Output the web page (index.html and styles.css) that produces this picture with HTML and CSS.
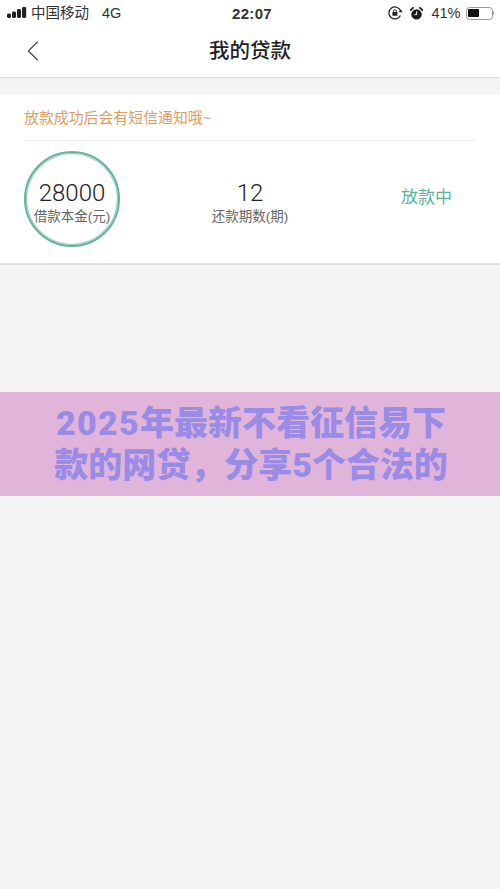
FILE: index.html
```html
<!DOCTYPE html>
<html>
<head>
    <title>我的贷款</title>
    <meta charset="utf-8">
    <link rel="stylesheet" href="styles.css">
</head>
<body>
    <div class="status-bar">
        <div class="status-left">
            <svg class="signal" width="20" height="12" viewBox="0 0 20 12">
                <rect x="0" y="6.5" width="4" height="4.5" rx="1.4"/>
                <rect x="5" y="4.5" width="4" height="6.5" rx="1.4"/>
                <rect x="10" y="2" width="4" height="9" rx="1.4"/>
                <rect x="15" y="0" width="4.2" height="11" rx="1.4"/>
            </svg>
            <span class="carrier">中国移动</span>
            <span class="network">4G</span>
        </div>
        <div class="status-time">22:07</div>
        <div class="status-right">
            <svg class="lock" width="15" height="14" viewBox="0 0 15 14">
                <path d="M12.4 9.4A6 6 0 1 1 12.6 5" fill="none" stroke="#222" stroke-width="1.3"/>
                <path d="M10.7 6.2h4l-2-2.6z" fill="#222"/>
                <rect x="4.4" y="6" width="5" height="3.8" rx=".6" fill="#222"/>
                <path d="M5.5 6V5a1.4 1.4 0 0 1 2.8 0v1" fill="none" stroke="#222" stroke-width=".9"/>
            </svg>
            <svg class="alarm" width="13" height="13" viewBox="0 0 13 13">
                <circle cx="6.5" cy="7.4" r="5.2" fill="#1c1c1c"/>
                <path d="M.6 3.2 3 .9M12.4 3.2 10 .9" stroke="#1c1c1c" stroke-width="1.8" stroke-linecap="round"/>
                <path d="M6.7 4.2v3.5H4.4" fill="none" stroke="#fff" stroke-width="1"/>
            </svg>
            <span class="battery-text">41%</span>
            <div class="battery"><div class="battery-fill"></div></div>
            <div class="battery-tip"></div>
        </div>
    </div>

    <div class="nav-bar">
        <svg class="back" width="12" height="20" viewBox="0 0 12 20">
            <path d="M10.8 .8 1.3 10l9.5 9.2" fill="none" stroke="#444" stroke-width="1.2"/>
        </svg>
        <div class="nav-title">我的贷款</div>
    </div>

    <div class="card">
        <div class="notice">放款成功后会有短信通知哦~</div>
        <div class="loan-row">
            <div class="circle">
                <div class="amount">28000</div>
                <div class="label">借款本金(元)</div>
            </div>
            <div class="periods">
                <div class="amount">12</div>
                <div class="label">还款期数(期)</div>
            </div>
            <div class="loan-status">放款中</div>
        </div>
    </div>

    <div class="banner">
        <div class="banner-text"><span class="year">2025</span>年最新不看征信易下<br>款的网贷，分享5个合法的</div>
    </div>
</body>
</html>
```

FILE: styles.css
```css
html, body {
    height: 100%;
}
body {
    margin: 0;
    background-color: #f4f4f4;
    font-family: "Liberation Sans", "Noto Sans CJK SC", sans-serif;
    color: #222;
}
.status-bar {
    height: 26px;
    background-color: #fff;
    display: grid;
    grid-template-columns: 1fr auto 1fr;
    align-items: center;
    padding: 0 8px 0 7px;
}
.status-left {
    display: flex;
    align-items: center;
    font-size: 14.5px;
    color: #333;
}
.signal {
    fill: #222;
    margin-right: 4px;
}
.carrier {
    margin-bottom: 3px;
}
.network {
    margin-left: 13px;
    font-size: 14.5px;
}
.status-time {
    font-size: 15px;
    font-weight: bold;
    letter-spacing: 0.3px;
    margin-left: 5px;
    color: #333;
}
.status-right {
    display: flex;
    align-items: center;
    justify-content: flex-end;
    font-size: 14.5px;
    color: #333;
}
.alarm {
    margin-left: 7px;
}
.battery-text {
    margin-left: 8px;
    margin-right: 5px;
}
.battery {
    width: 27px;
    height: 13px;
    box-sizing: border-box;
    border: 1px solid #999;
    border-radius: 3.5px;
    padding: 1.5px;
}
.battery-fill {
    width: 11px;
    height: 100%;
    background-color: #111;
    border-radius: 1px;
}
.battery-tip {
    width: 1.5px;
    height: 4px;
    background-color: #aaa;
    margin-right: -2px;
}
.nav-bar {
    height: 51px;
    background-color: #fff;
    border-bottom: 1px solid #dcdcdc;
    display: flex;
    align-items: center;
    justify-content: center;
    position: relative;
}
.back {
    position: absolute;
    left: 27px;
    top: 15px;
}
.nav-title {
    font-size: 20.5px;
    font-weight: 500;
    color: #222;
    margin-bottom: 6px;
}
.card {
    margin-top: 17px;
    background-color: #fff;
    border-bottom: 2px solid #e0e0e0;
    padding: 0 24px;
}
.notice {
    height: 45px;
    line-height: 47px;
    font-size: 14.9px;
    color: #e09b5e;
    border-bottom: 1px solid #eee;
}
.loan-row {
    display: grid;
    grid-template-columns: 96px 1fr 96px;
    align-items: center;
    padding: 10px 0 16px;
}
.circle {
    width: 96px;
    height: 96px;
    box-sizing: border-box;
    border: 2px solid #65b29e;
    border-radius: 50%;
    box-shadow: inset 0 0 1px 1px #8cc7b7;
    padding-top: 8px;
    display: flex;
    flex-direction: column;
    align-items: center;
    justify-content: center;
}
.periods {
    text-align: center;
    padding-top: 8px;
}
.amount {
    font-family: Roboto, "Liberation Sans", sans-serif;
    font-size: 24px;
    font-weight: 300;
    line-height: 27px;
    color: #222;
}
.label {
    font-size: 13.5px;
    line-height: 20px;
    color: #666;
    white-space: nowrap;
}
.loan-status {
    font-size: 17px;
    text-align: center;
    color: #5db39c;
    margin: 0 0 8px -3px;
}
.banner {
    margin-top: 127px;
    height: 104px;
    background-color: #e0b5d9;
    display: flex;
    align-items: center;
    justify-content: center;
}
.banner-text {
    font-family: Roboto, "Noto Sans CJK SC", sans-serif;
    font-size: 34px;
    font-weight: 900;
    line-height: 42px;
    text-align: center;
    color: #9a8ce6;
    margin-left: 2px;
}
.year {
    letter-spacing: 1.3px;
}
```
